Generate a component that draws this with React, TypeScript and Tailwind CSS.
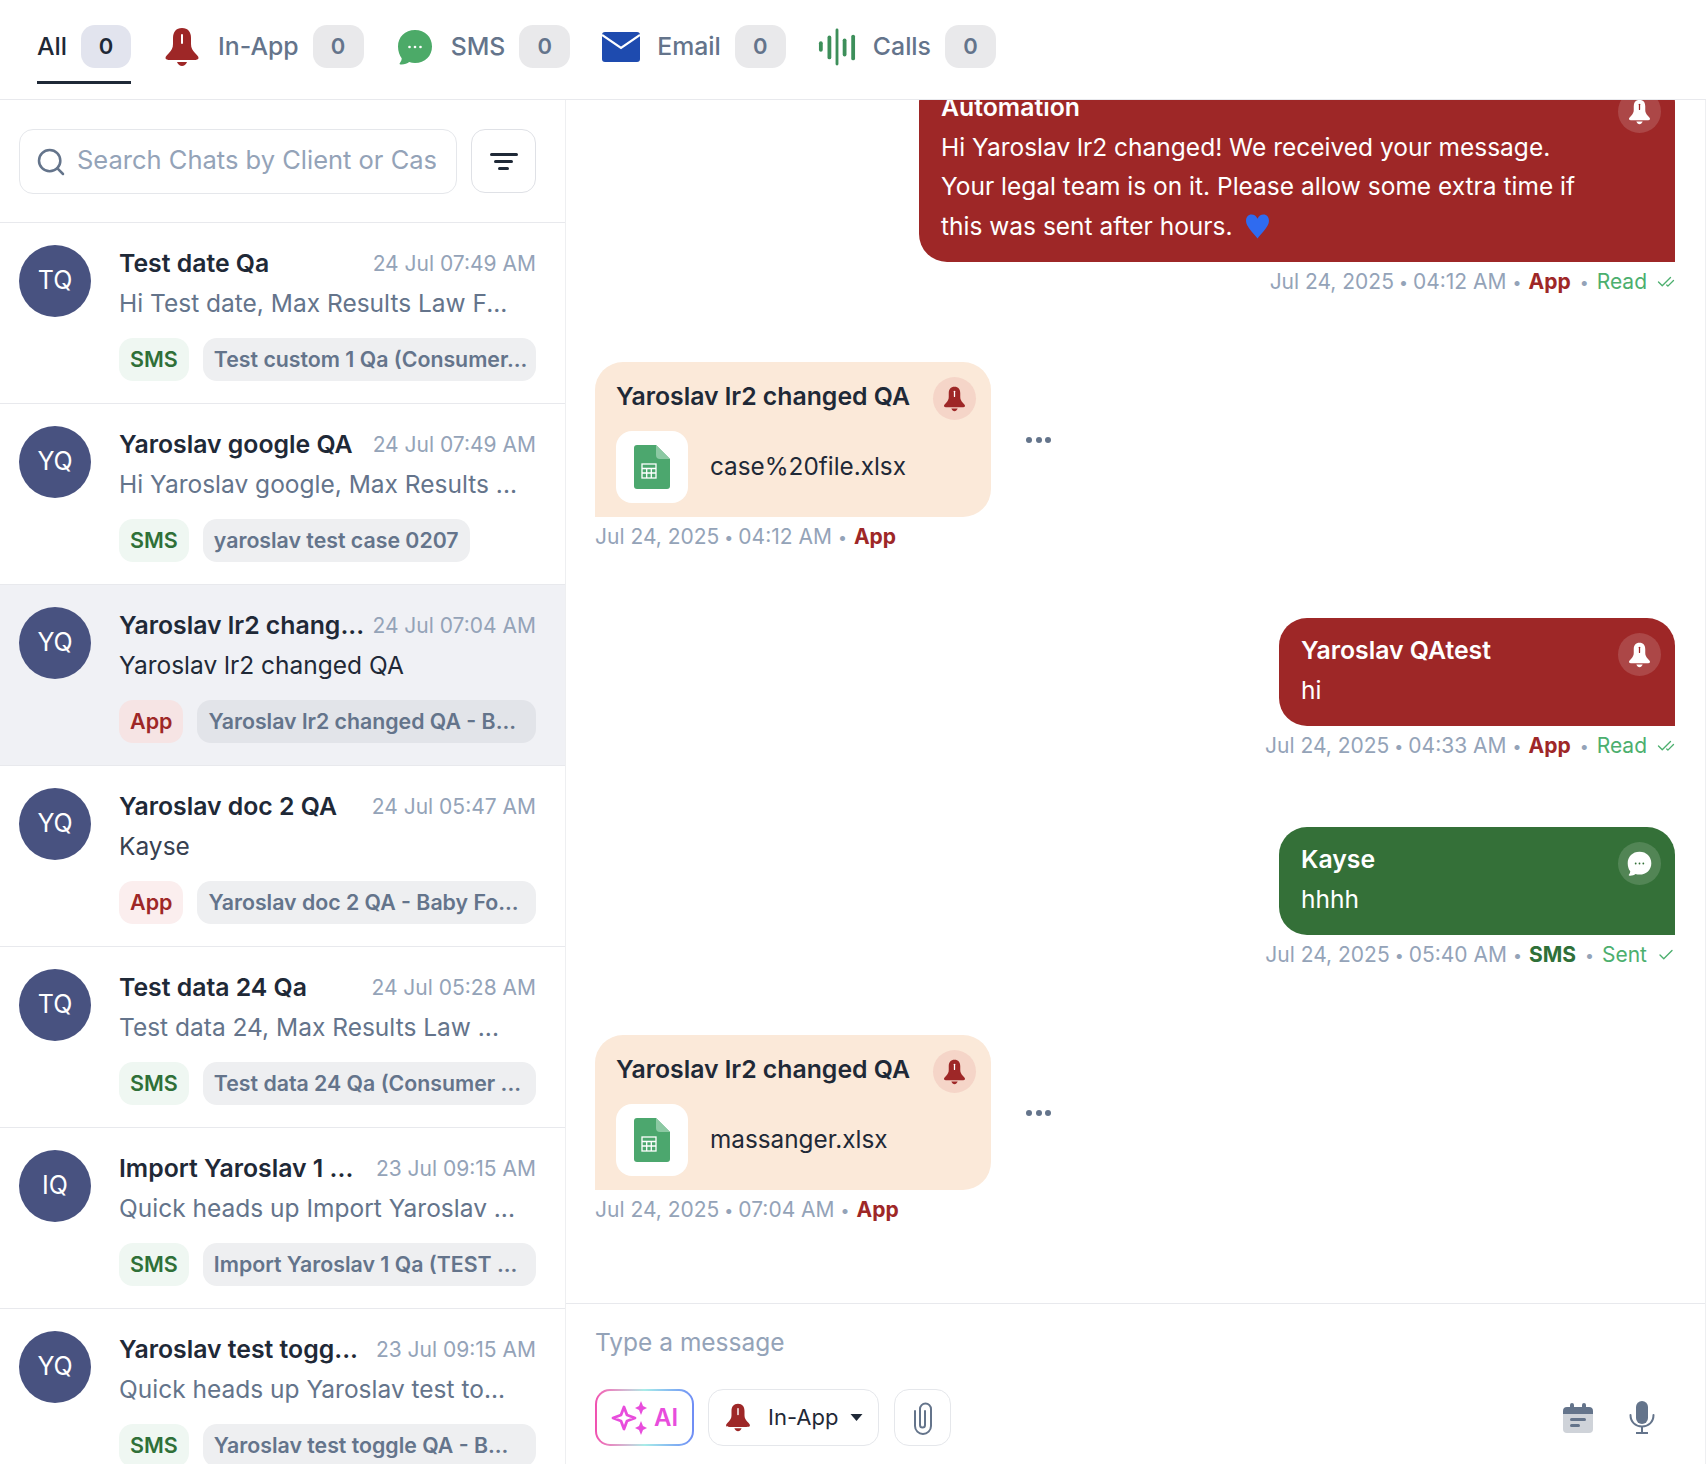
import React from 'react';
import { Search, Check, CheckCheck } from 'lucide-react';

const FONT = 'font-["Inter","Noto_Sans",sans-serif]';

const BellIcon = ({ className = '', slit = '#fff' }: { className?: string; slit?: string }) => (
  <svg viewBox="0 0 36 40" className={className} fill="currentColor">
    <path d="M18 1C12 1 9 5 9 11v6c0 4-1.500 6-4 9-2 2-3.500 3.500-3.500 5 0 1.500 2 2 5 2h23c3 0 5-.500 5-2 0-1.500-1.500-3-3.500-5-2.500-3-4-5-4-9v-6C27 5 24 1 18 1z" />
    <path d="M13 35h10c-1 2.600-3 4-5 4s-4-1.400-5-4z" />
    <rect x="17" y="7" width="2" height="10" rx="1" fill={slit} />
  </svg>
);

const ChatIcon = ({ className = '', dots = '#fff' }: { className?: string; dots?: string }) => (
  <svg viewBox="0 0 36 36" className={className} fill="currentColor">
    <path d="M18 1c10 0 17 7 17 16.500S28 34 18 34c-2 0-4-.3-5.800-.9-2 1.600-5.200 2.700-8.700 2.400-1 0-1.200-.9-.6-1.500 1.200-1.400 1.800-3 1.800-4.700C2.700 26.700 1 22.500 1 17.500 1 8 8 1 18 1z" />
    <circle cx="12.500" cy="18" r="1.300" fill={dots} />
    <circle cx="18" cy="18" r="1.300" fill={dots} />
    <circle cx="23.500" cy="18" r="1.300" fill={dots} />
  </svg>
);

const MailIcon = ({ className = '' }: { className?: string }) => (
  <svg viewBox="0 0 38 30" className={className}>
    <rect x="0" y="0" width="38" height="30" rx="3" fill="#1e4baf" />
    <path d="M0 3l19 13L38 3" fill="none" stroke="#fff" strokeWidth="2.200" />
  </svg>
);

const WaveIcon = ({ className = '' }: { className?: string }) => (
  <svg viewBox="0 0 40 40" className={className} stroke="#3d8f5a" strokeLinecap="round" fill="none" strokeWidth="4">
    <path d="M3 16v7" />
    <path d="M12 10v21" />
    <path d="M20 2v36" strokeWidth="3" />
    <path d="M28 13v15" />
    <path d="M37 9v23" />
  </svg>
);

const SheetIcon = () => (
  <svg viewBox="0 0 36 44" className="w-[36px] h-[44px]">
    <path d="M3 0h19l14 14v27a3 3 0 0 1-3 3H3a3 3 0 0 1-3-3V3a3 3 0 0 1 3-3z" fill="#4ca76e" />
    <path d="M22 0l14 14H26a4 4 0 0 1-4-4V0z" fill="#8cc9a3" />
    <g fill="none" stroke="#fff" strokeWidth="1.300">
      <rect x="8" y="19" width="14" height="14" />
      <path d="M8 23.500h14M8 28h14M12.700 23.500V33M17.300 23.500V33" />
    </g>
  </svg>
);

const HeartIcon = () => (
  <svg viewBox="0 0 24 24" className="inline-block w-[25px] h-[25px] ml-[12px] align-[-4px]">
    <path d="M12 23.500C7 17 1 12 1 6.500 1 3 3 .5 6.300.5 8.800.5 10.900 2 12 4.500 13.100 2 15.200.5 17.700.5 21 .5 23 3 23 6.500 23 12 17 17 12 23.500z" fill="#2f6bf0" />
  </svg>
);

const tabs = [
  { label: 'In-App', icon: <BellIcon className="w-[36px] h-[40px] text-[#9e2727]" /> },
  { label: 'SMS', icon: <ChatIcon className="w-[36px] h-[36px] text-[#4caa68]" dots="#fff" /> },
  { label: 'Email', icon: <MailIcon className="w-[38px] h-[30px]" /> },
  { label: 'Calls', icon: <WaveIcon className="w-[40px] h-[40px]" /> },
];

const chats = [
  { initials: 'TQ', name: 'Test date Qa', date: '24 Jul 07:49 AM', preview: 'Hi Test date, Max Results Law F...', channel: 'SMS', chip: 'Test custom 1 Qa (Consumer...' },
  { initials: 'YQ', name: 'Yaroslav google QA', date: '24 Jul 07:49 AM', preview: 'Hi Yaroslav google, Max Results ...', channel: 'SMS', chip: 'yaroslav test case 0207', short: true },
  { initials: 'YQ', name: 'Yaroslav lr2 chang...', date: '24 Jul 07:04 AM', preview: 'Yaroslav lr2 changed QA', channel: 'App', chip: 'Yaroslav lr2 changed QA - B...', active: true },
  { initials: 'YQ', name: 'Yaroslav doc 2 QA', date: '24 Jul 05:47 AM', preview: 'Kayse', channel: 'App', chip: 'Yaroslav doc 2 QA - Baby Fo...' },
  { initials: 'TQ', name: 'Test data 24 Qa', date: '24 Jul 05:28 AM', preview: 'Test data 24, Max Results Law ...', channel: 'SMS', chip: 'Test data 24 Qa (Consumer ...' },
  { initials: 'IQ', name: 'Import Yaroslav 1 ...', date: '23 Jul 09:15 AM', preview: 'Quick heads up Import Yaroslav ...', channel: 'SMS', chip: 'Import Yaroslav 1 Qa (TEST ...' },
  { initials: 'YQ', name: 'Yaroslav test togg...', date: '23 Jul 09:15 AM', preview: 'Quick heads up Yaroslav test to...', channel: 'SMS', chip: 'Yaroslav test toggle QA - B...' },
];

const ChatRow = ({ chat }: { chat: (typeof chats)[number] }) => (
  <div className={`h-[181px] shrink-0 flex gap-[28px] pl-[19px] pr-[29px] pt-[22px] border-b border-[#e8e9ed] ${chat.active ? 'bg-[#f0f1f5]' : 'bg-white'}`}>
    <div className="w-[72px] h-[72px] shrink-0 rounded-full bg-[#485280] text-white text-[25px] flex items-center justify-center">
      {chat.initials}
    </div>
    <div className="flex-1 min-w-0">
      <div className="flex items-center justify-between h-[38px]">
        <span className="text-[24.800px] font-semibold text-[#1f2937] whitespace-nowrap">{chat.name}</span>
        <span className="text-[21px] text-[#94a3b8] whitespace-nowrap">{chat.date}</span>
      </div>
      <div className={`h-[40px] flex items-center text-[24.500px] whitespace-nowrap ${chat.active ? 'text-[#1f2937]' : chat.channel === 'App' ? 'text-[#374151]' : 'text-[#64748b]'}`}>
        {chat.preview}
      </div>
      <div className="flex gap-[14px] mt-[15px]">
        {chat.channel === 'SMS' ? (
          <span className="h-[43px] px-[11px] rounded-[14px] bg-[#eff7f2] text-[#2f7038] text-[21.500px] font-semibold flex items-center">SMS</span>
        ) : (
          <span className={`h-[43px] px-[11px] rounded-[14px] text-[#9e2727] text-[21.500px] font-semibold flex items-center ${chat.active ? 'bg-[#f6e4e4]' : 'bg-[#fbeeee]'}`}>App</span>
        )}
        <span className={`h-[43px] min-w-0 px-[11px] rounded-[14px] text-[#64748b] text-[21.300px] font-semibold flex items-center whitespace-nowrap overflow-hidden ${chat.short ? '' : 'flex-1'} ${chat.active ? 'bg-[#e2e4e9]' : 'bg-[#eeeff1]'}`}>
          {chat.chip}
        </span>
      </div>
    </div>
  </div>
);

const Meta = ({ date, time, channel, status }: { date: string; time: string; channel: string; status?: string }) => (
  <div className={`h-[38px] pt-[2px] flex items-center whitespace-nowrap text-[21px] text-[#94a3b8] ${status ? 'justify-end' : ''}`}>
    <span>{date}</span>
    <span className="mx-[5px] text-[16px]">•</span>
    <span>{time}</span>
    <span className="ml-[6px] text-[16px]">•</span>
    <span className={`ml-[7px] font-bold ${channel === 'SMS' ? 'text-[#2f7038]' : 'text-[#9e2727]'}`}>{channel}</span>
    {status && (
      <>
        <span className="ml-[9px] text-[16px]">•</span>
        <span className="ml-[8px] text-[#4caf6e]">{status}</span>
        {status === 'Read' ? (
          <CheckCheck className="w-[18px] h-[18px] shrink-0 ml-[10px] text-[#4caf6e]" strokeWidth={1.800} />
        ) : (
          <Check className="w-[18px] h-[18px] shrink-0 ml-[10px] text-[#4caf6e]" strokeWidth={1.800} />
        )}
      </>
    )}
  </div>
);

const Outgoing = ({ title, green, wide, children }: { title: string; green?: boolean; wide?: boolean; children: React.ReactNode }) => (
  <div className={`relative ml-auto rounded-t-[28px] rounded-bl-[28px] pl-[22px] pr-[22px] pt-[13px] pb-[16px] text-white text-[24.500px] leading-[39.500px] ${wide ? 'w-[756px]' : 'w-[396px]'} ${green ? 'bg-[#347038]' : 'bg-[#9e2727]'}`}>
    <div className="font-semibold text-[24.800px]">{title}</div>
    <div>{children}</div>
    <div className="absolute top-[15px] right-[14px] w-[43px] h-[43px] rounded-full bg-white/15 flex items-center justify-center">
      {green ? (
        <ChatIcon className="w-[25px] h-[25px] text-white" dots="#347038" />
      ) : (
        <BellIcon className="w-[23px] h-[26px] text-white" slit="#9e2727" />
      )}
    </div>
  </div>
);

const Incoming = ({ file }: { file: string }) => (
  <div className="flex items-center">
    <div className="relative w-[396px] h-[155px] rounded-t-[28px] rounded-br-[28px] bg-[#fbe9d9] pl-[21px] pt-[15px] text-[#1f2937]">
      <div className="text-[24.800px] leading-[38px] font-semibold">Yaroslav lr2 changed QA</div>
      <div className="absolute top-[15px] right-[15px] w-[43px] h-[43px] rounded-full bg-[#f5d5c8] flex items-center justify-center">
        <BellIcon className="w-[23px] h-[26px] text-[#9e2727]" />
      </div>
      <div className="flex items-center mt-[16px]">
        <div className="w-[72px] h-[72px] rounded-[16px] bg-white flex items-center justify-center">
          <SheetIcon />
        </div>
        <span className="ml-[22px] text-[24.300px] -mt-[2px]">{file}</span>
      </div>
    </div>
    <div className="ml-[35px] flex gap-[3.500px]">
      <span className="w-[6px] h-[6px] rounded-full bg-[#64748b]" />
      <span className="w-[6px] h-[6px] rounded-full bg-[#64748b]" />
      <span className="w-[6px] h-[6px] rounded-full bg-[#64748b]" />
    </div>
  </div>
);

export default function App() {
  return (
    <div className={`h-screen overflow-hidden flex flex-col bg-white ${FONT}`}>
      {/* channel tabs */}
      <div className="h-[100px] shrink-0 border-b border-[#e8e9ed] flex items-start pl-[37px] pt-[25px]">
        <div className="h-[59px] flex items-start gap-[14px] border-b-[3px] border-[#1f2937]">
          <span className="h-[43px] flex items-center text-[24.800px] font-medium text-[#1f2937]">All</span>
          <span className="w-[50px] h-[43px] rounded-[14px] bg-[#e2e4ee] text-[22px] font-semibold text-[#1f2937] flex items-center justify-center">0</span>
        </div>
        {tabs.map((tab) => (
          <div key={tab.label} className="h-[43px] ml-[32px] flex items-center">
            <span className="w-[38px] flex justify-center">{tab.icon}</span>
            <span className="ml-[17px] text-[24.800px] font-medium text-[#64748b]">{tab.label}</span>
            <span className="ml-[14px] w-[51px] h-[43px] rounded-[14px] bg-[#e9e9eb] text-[22px] font-semibold text-[#64748b] flex items-center justify-center">0</span>
          </div>
        ))}
      </div>

      <div className="flex-1 min-h-0 flex">
        {/* chat list */}
        <div className="w-[566px] shrink-0 border-r border-[#eeeff1] flex flex-col overflow-hidden">
          <div className="h-[123px] shrink-0 border-b border-[#e8e9ed] flex gap-[14px] pl-[19px] pt-[29px]">
            <div className="w-[438px] h-[65px] rounded-[14px] border border-[#e5e7eb] flex items-center pl-[15px] pr-[20px]">
              <Search className="w-[32px] h-[32px] shrink-0 text-[#64748b]" strokeWidth={1.900} />
              <input
                readOnly
                placeholder="Search Chats by Client or Case"
                className="ml-[10px] -mt-[2px] flex-1 min-w-0 text-[25.500px] outline-none placeholder:text-[#94a3b8]"
              />
            </div>
            <button className="w-[65px] h-[64px] rounded-[14px] border border-[#dfe1e6] flex flex-col items-center justify-center gap-[4px]">
              <span className="w-[28px] h-[3px] rounded bg-[#1f2937]" />
              <span className="w-[19px] h-[3px] rounded bg-[#1f2937]" />
              <span className="w-[11px] h-[3px] rounded bg-[#1f2937]" />
            </button>
          </div>
          {chats.map((chat, i) => (
            <ChatRow key={i} chat={chat} />
          ))}
        </div>

        {/* conversation */}
        <div className="flex-1 min-w-0 flex flex-col border-r border-[#eeeff1]">
          <div className="flex-1 min-h-0 overflow-hidden pl-[29px] pr-[30px]">
            <div className="-mt-[25px]">
              <Outgoing title="Automation" wide>
                Hi Yaroslav lr2 changed! We received your message.
                <br />
                Your legal team is on it. Please allow some extra time if
                <br />
                this was sent after hours.
                <HeartIcon />
              </Outgoing>
              <Meta date="Jul 24, 2025" time="04:12 AM" channel="App" status="Read" />
              <div className="mt-[62px]">
                <Incoming file="case%20file.xlsx" />
                <Meta date="Jul 24, 2025" time="04:12 AM" channel="App" />
              </div>
              <div className="mt-[63px]">
                <Outgoing title="Yaroslav QAtest">hi</Outgoing>
                <Meta date="Jul 24, 2025" time="04:33 AM" channel="App" status="Read" />
              </div>
              <div className="mt-[63px]">
                <Outgoing title="Kayse" green>
                  hhhh
                </Outgoing>
                <Meta date="Jul 24, 2025" time="05:40 AM" channel="SMS" status="Sent" />
              </div>
              <div className="mt-[62px]">
                <Incoming file="massanger.xlsx" />
                <Meta date="Jul 24, 2025" time="07:04 AM" channel="App" />
              </div>
            </div>
          </div>

          {/* composer */}
          <div className="h-[161px] shrink-0 border-t border-[#e8e9ed] pl-[29px] pr-[50px] pt-[18px]">
            <input
              readOnly
              placeholder="Type a message"
              className="block w-full h-[40px] text-[24.500px] outline-none placeholder:text-[#94a3b8]"
            />
            <div className="flex items-center mt-[27px]">
              <div className="w-[99px] h-[57px] rounded-[15px] p-[2px] bg-gradient-to-r from-[#f04fb0] via-[#a8ece8] to-[#6f8cf5]">
                <div className="w-full h-full rounded-[13px] bg-white flex items-center justify-center gap-[7px] text-[#e84ddc]">
                  <svg viewBox="0 0 36 36" className="w-[36px] h-[36px]" fill="none" stroke="currentColor" strokeWidth="2.800" strokeLinejoin="round">
                    <path d="M13 7l3 8 8 3-8 3-3 8-3-8-8-3 8-3z" />
                    <path d="M30 1l2 5 4 2-4 2-2 5-2-5-4-2 4-2z" fill="currentColor" stroke="none" />
                    <path d="M30 21l2 5 4 2-4 2-2 5-2-5-4-2 4-2z" fill="currentColor" stroke="none" />
                  </svg>
                  <span className="text-[24px] font-semibold">AI</span>
                </div>
              </div>
              <div className="ml-[14px] w-[171px] h-[57px] rounded-[15px] border border-[#e5e7eb] flex items-center pl-[16px]">
                <BellIcon className="w-[26px] h-[29px] text-[#9e2727]" />
                <span className="ml-[17px] text-[22px] text-[#1f2937]">In-App</span>
                <svg viewBox="0 0 12 7" className="ml-[12px] w-[13px] h-[7px]" fill="#1f2937">
                  <path d="M0 0h12L6 7z" />
                </svg>
              </div>
              <div className="ml-[15px] w-[57px] h-[57px] rounded-[15px] border border-[#e5e7eb] flex items-center justify-center">
                <svg viewBox="0 0 20 34" className="w-[20px] h-[34px]" fill="none" stroke="#64748b" strokeWidth="2" strokeLinecap="round">
                  <path d="M2 10v15a8 8 0 0 0 16 0V8a5.500 5.500 0 0 0-11 0v16a2.500 2.500 0 0 0 5 0V10" />
                </svg>
              </div>
              <svg viewBox="0 0 30 30" className="ml-auto w-[30px] h-[30px]">
                <path d="M0 10h30v16a4 4 0 0 1-4 4H4a4 4 0 0 1-4-4z" fill="#cfd3d9" />
                <path d="M4 4h3V2a2 2 0 0 1 4 0v2h8V2a2 2 0 0 1 4 0v2h3a4 4 0 0 1 4 4v3H0V8a4 4 0 0 1 4-4z" fill="#64748b" />
                <rect x="7" y="15" width="16" height="3" rx="1.500" fill="#64748b" />
                <rect x="7" y="21" width="10" height="3" rx="1.500" fill="#64748b" />
              </svg>
              <svg viewBox="0 0 26 33" className="ml-[36px] w-[26px] h-[33px]" fill="none" stroke="#64748b">
                <rect x="7" y="0" width="12" height="23" rx="6" fill="#64748b" stroke="none" />
                <path d="M1.500 14c0 7 5 11.500 11.500 11.500S24.500 21 24.500 14" strokeWidth="2" strokeLinecap="round" />
                <path d="M13 25.500V31.500M7 32h12" strokeWidth="2" />
              </svg>
            </div>
          </div>
        </div>
      </div>
    </div>
  );
}
